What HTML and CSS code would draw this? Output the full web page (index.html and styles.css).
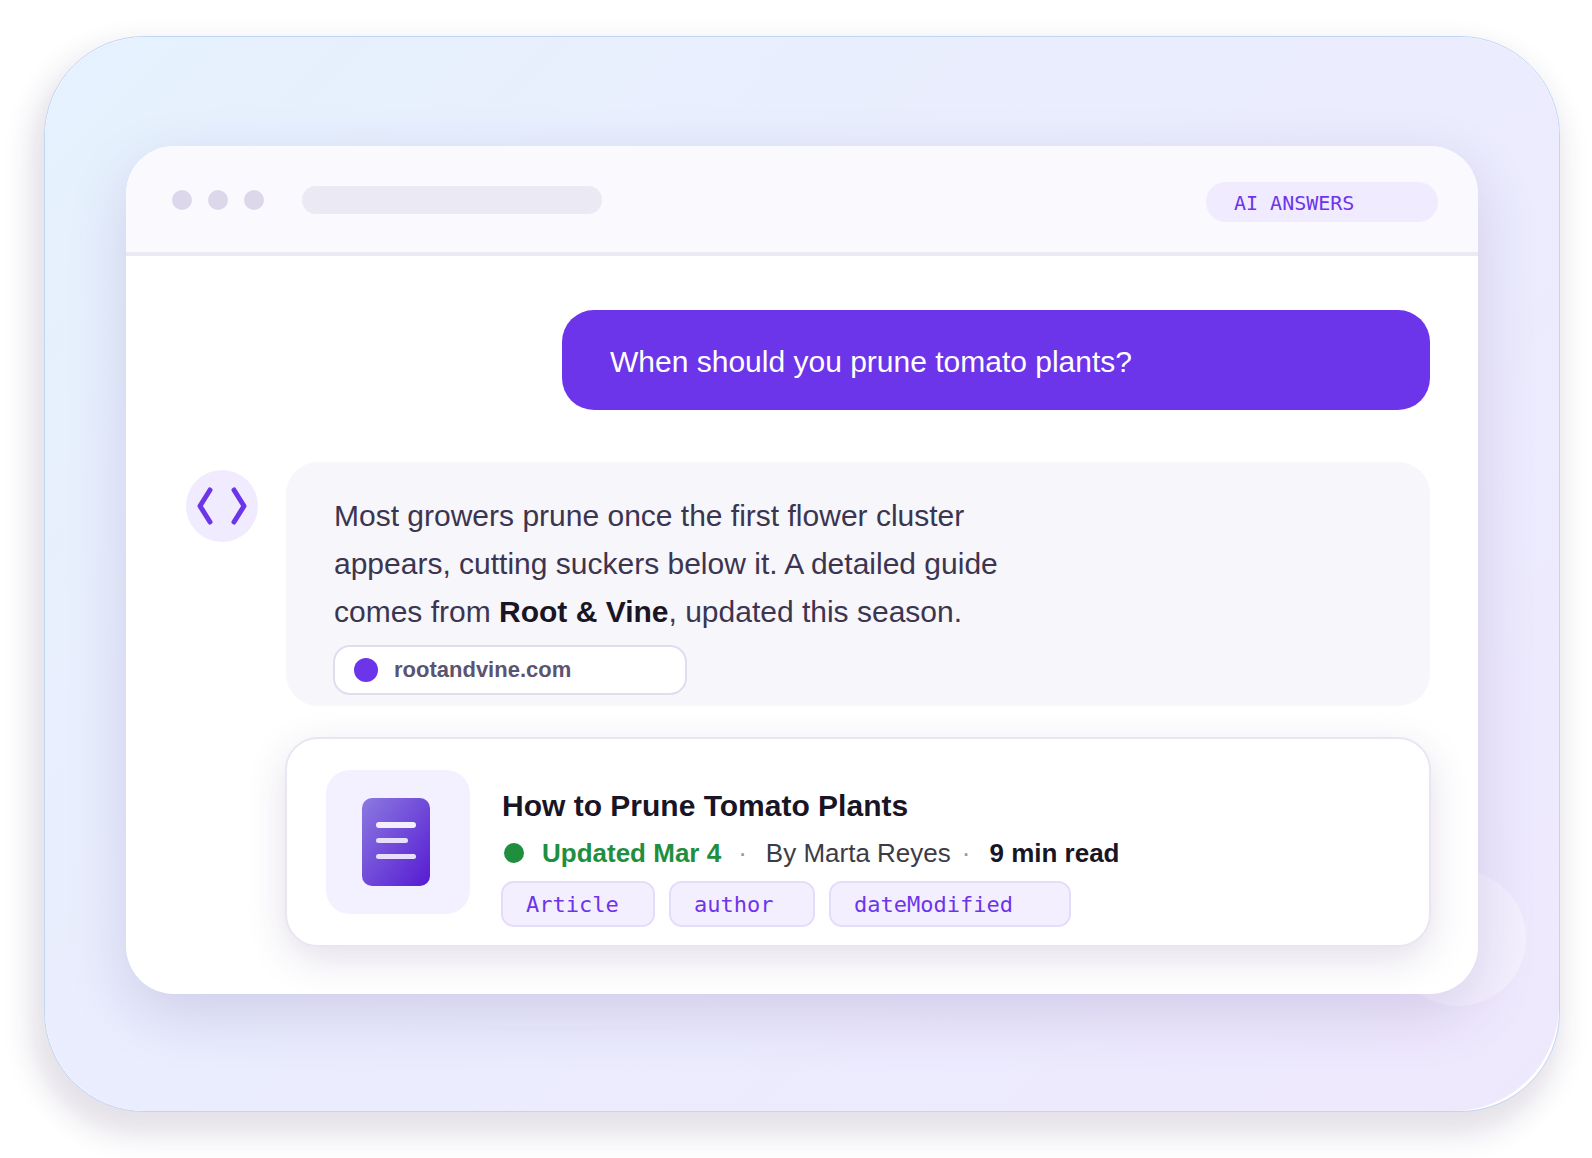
FILE: index.html
```html
<!DOCTYPE html>
<html lang="en">
<head>
<meta charset="utf-8">
<title>AI answers</title>
<link rel="stylesheet" href="styles.css">
</head>
<body>
<main class="frame">
  <div class="stage">
    <span class="orb"></span>
    <section class="window">
      <header class="toolbar">
        <span class="dot"></span>
        <span class="dot"></span>
        <span class="dot"></span>
        <span class="address"></span>
        <span class="badge">AI ANSWERS</span>
      </header>
      <div class="chat">
        <p class="question">When should you prune tomato plants?</p>
        <div class="reply">
          <div class="avatar">
            <svg width="72" height="72" viewBox="0 0 72 72" fill="none" stroke="#6d35ea" stroke-width="5" stroke-linecap="round" stroke-linejoin="round" aria-hidden="true">
              <path d="M24 20L14 36l10 16M48 20l10 16-10 16"/>
            </svg>
          </div>
          <div class="answer">
            <p class="answer-text">Most growers prune once the first flower cluster<br>appears, cutting suckers below it. A detailed guide<br>comes from <strong>Root &amp; Vine</strong>, updated this season.</p>
            <a class="source" href="#"><span class="source-dot"></span>rootandvine.com</a>
          </div>
        </div>
        <article class="card">
          <div class="thumb">
            <svg width="68" height="88" viewBox="0 0 68 88" aria-hidden="true">
              <defs>
                <linearGradient id="page" x1="0" y1="0" x2="1" y2="1">
                  <stop offset="0" stop-color="#8b7ae0"/>
                  <stop offset="1" stop-color="#561bd2"/>
                </linearGradient>
              </defs>
              <rect width="68" height="88" rx="10" fill="url(#page)"/>
              <rect x="14" y="24" width="40" height="6" rx="3" fill="#f3effe"/>
              <rect x="14" y="40" width="32" height="5" rx="2.500" fill="#e8e0fb"/>
              <rect x="14" y="56" width="40" height="5" rx="2.500" fill="#e8e0fb"/>
            </svg>
          </div>
          <div class="details">
            <h2 class="title">How to Prune Tomato Plants</h2>
            <p class="meta"><span class="status"></span><b class="updated">Updated Mar 4</b><span class="sep">·</span><span>By Marta Reyes</span><span class="sep sep-tight">·</span><b>9 min read</b></p>
            <ul class="tags">
              <li class="tag tag-m">Article</li>
              <li class="tag tag-s">author</li>
              <li class="tag tag-l">dateModified</li>
            </ul>
          </div>
        </article>
      </div>
    </section>
  </div>
</main>
</body>
</html>
```
FILE: styles.css
```css
* {
  box-sizing: border-box;
}

body {
  margin: 0;
  padding: 36px 32px 46px 44px;
  background: #fff;
  color: #1a1524;
  font-family: "Liberation Sans", Arial, sans-serif;
}

p, h2, ul {
  margin: 0;
  padding: 0;
}

.frame {
  border: 1px solid #c1d5f4;
  border-radius: 100px;
  background: #fff;
  box-shadow: -6px 16px 28px 8px rgba(44, 20, 80, 0.13);
}

.stage {
  position: relative;
  padding: 109px 81px 117px;
  border-radius: 100px 100px 106px 100px;
  background: linear-gradient(135deg, #e5f2fe 0%, #e8effd 24%, #ebecfd 58%, #efe8fd 100%);
}

.orb {
  position: absolute;
  right: 33px;
  bottom: 105px;
  width: 136px;
  height: 136px;
  border-radius: 50%;
  background: rgba(255, 255, 255, 0.35);
}

.window {
  position: relative;
  border-radius: 48px;
  background: #fff;
  box-shadow: 0 20px 60px rgba(60, 30, 120, 0.15);
}

.toolbar {
  display: flex;
  align-items: center;
  gap: 16px;
  height: 110px;
  padding: 2px 40px 0 46px;
  border-bottom: 4px solid #ebe9f4;
  border-radius: 48px 48px 0 0;
  background: #faf9fe;
}

.dot {
  width: 20px;
  height: 20px;
  border-radius: 50%;
  background: #dcd7eb;
}

.address {
  width: 300px;
  height: 28px;
  margin-left: 22px;
  border-radius: 14px;
  background: #ebe9f4;
}

.badge {
  width: 232px;
  height: 40px;
  margin: 4px 0 0 auto;
  padding: 0 28px;
  border-radius: 20px;
  background: #f0ebfe;
  color: #6d35ea;
  font: 20px/42px "DejaVu Sans Mono", monospace;
}

.chat {
  display: flex;
  flex-direction: column;
  padding: 54px 48px 48px 60px;
}

.question {
  width: 100%;
  max-width: 868px;
  margin-left: auto;
  padding: 28px 48px 24px;
  border-radius: 32px;
  background: #6d35ea;
  color: #fff;
  font-size: 30px;
  line-height: 48px;
}

.reply {
  display: flex;
  gap: 28px;
  margin-top: 52px;
}

.avatar {
  flex: none;
  width: 72px;
  height: 72px;
  margin-top: 8px;
  border-radius: 50%;
  background: #f0ebfe;
}

.answer {
  flex: 1;
  padding: 30px 48px 12px;
  border-radius: 32px;
  background: #f7f6fb;
}

.answer-text {
  color: #3b3550;
  font-size: 30px;
  line-height: 48px;
}

.answer-text strong {
  color: #1a1524;
}

.source {
  display: flex;
  align-items: center;
  gap: 16px;
  width: 352px;
  height: 48px;
  margin-top: 10px;
  padding: 0 20px;
  border-radius: 16px;
  outline: 2px solid #e1ddf0;
  outline-offset: -1px;
  background: #fff;
  color: #5a5470;
  font-size: 22px;
  font-weight: bold;
  line-height: 26px;
  text-decoration: none;
}

.source-dot {
  width: 24px;
  height: 24px;
  border-radius: 50%;
  background: #6d35ea;
}

.card {
  display: flex;
  gap: 32px;
  margin: 32px 0 0 100px;
  padding: 32px 40px 20px;
  border-radius: 32px;
  outline: 2px solid #e9e6f4;
  outline-offset: -1px;
  background: #fff;
  box-shadow: 0 12px 40px rgba(60, 30, 100, 0.15);
}

.thumb {
  display: flex;
  flex: none;
  width: 144px;
  height: 144px;
  padding: 28px 36px;
  border-radius: 24px;
  background: #f3f0ff;
}

.details {
  padding-top: 16px;
}

.title {
  font-size: 30px;
  line-height: 40px;
}

.meta {
  display: flex;
  align-items: center;
  margin-top: 7px;
  font-size: 26px;
  line-height: 40px;
}

.meta span {
  color: #3c3c46;
}

.meta .status {
  width: 20px;
  height: 20px;
  margin: 0 18px 0 2px;
  border-radius: 50%;
  background: #1f8f3f;
}

.meta .updated {
  color: #1f8f3f;
}

.meta .sep {
  margin: 0 19px 0 17px;
  color: #9a95a8;
}

.meta .sep-tight {
  margin-left: 11px;
}

.tags {
  display: flex;
  gap: 16px;
  margin-top: 9px;
  list-style: none;
}

.tag {
  height: 44px;
  padding: 0 24px;
  border-radius: 12px;
  outline: 2px solid #e5dcfb;
  outline-offset: -1px;
  background: #f4effe;
  color: #6d35ea;
  font: 22px/46px "DejaVu Sans Mono", monospace;
}

.tag-s {
  width: 144px;
}

.tag-m {
  width: 152px;
}

.tag-l {
  width: 240px;
}
```
